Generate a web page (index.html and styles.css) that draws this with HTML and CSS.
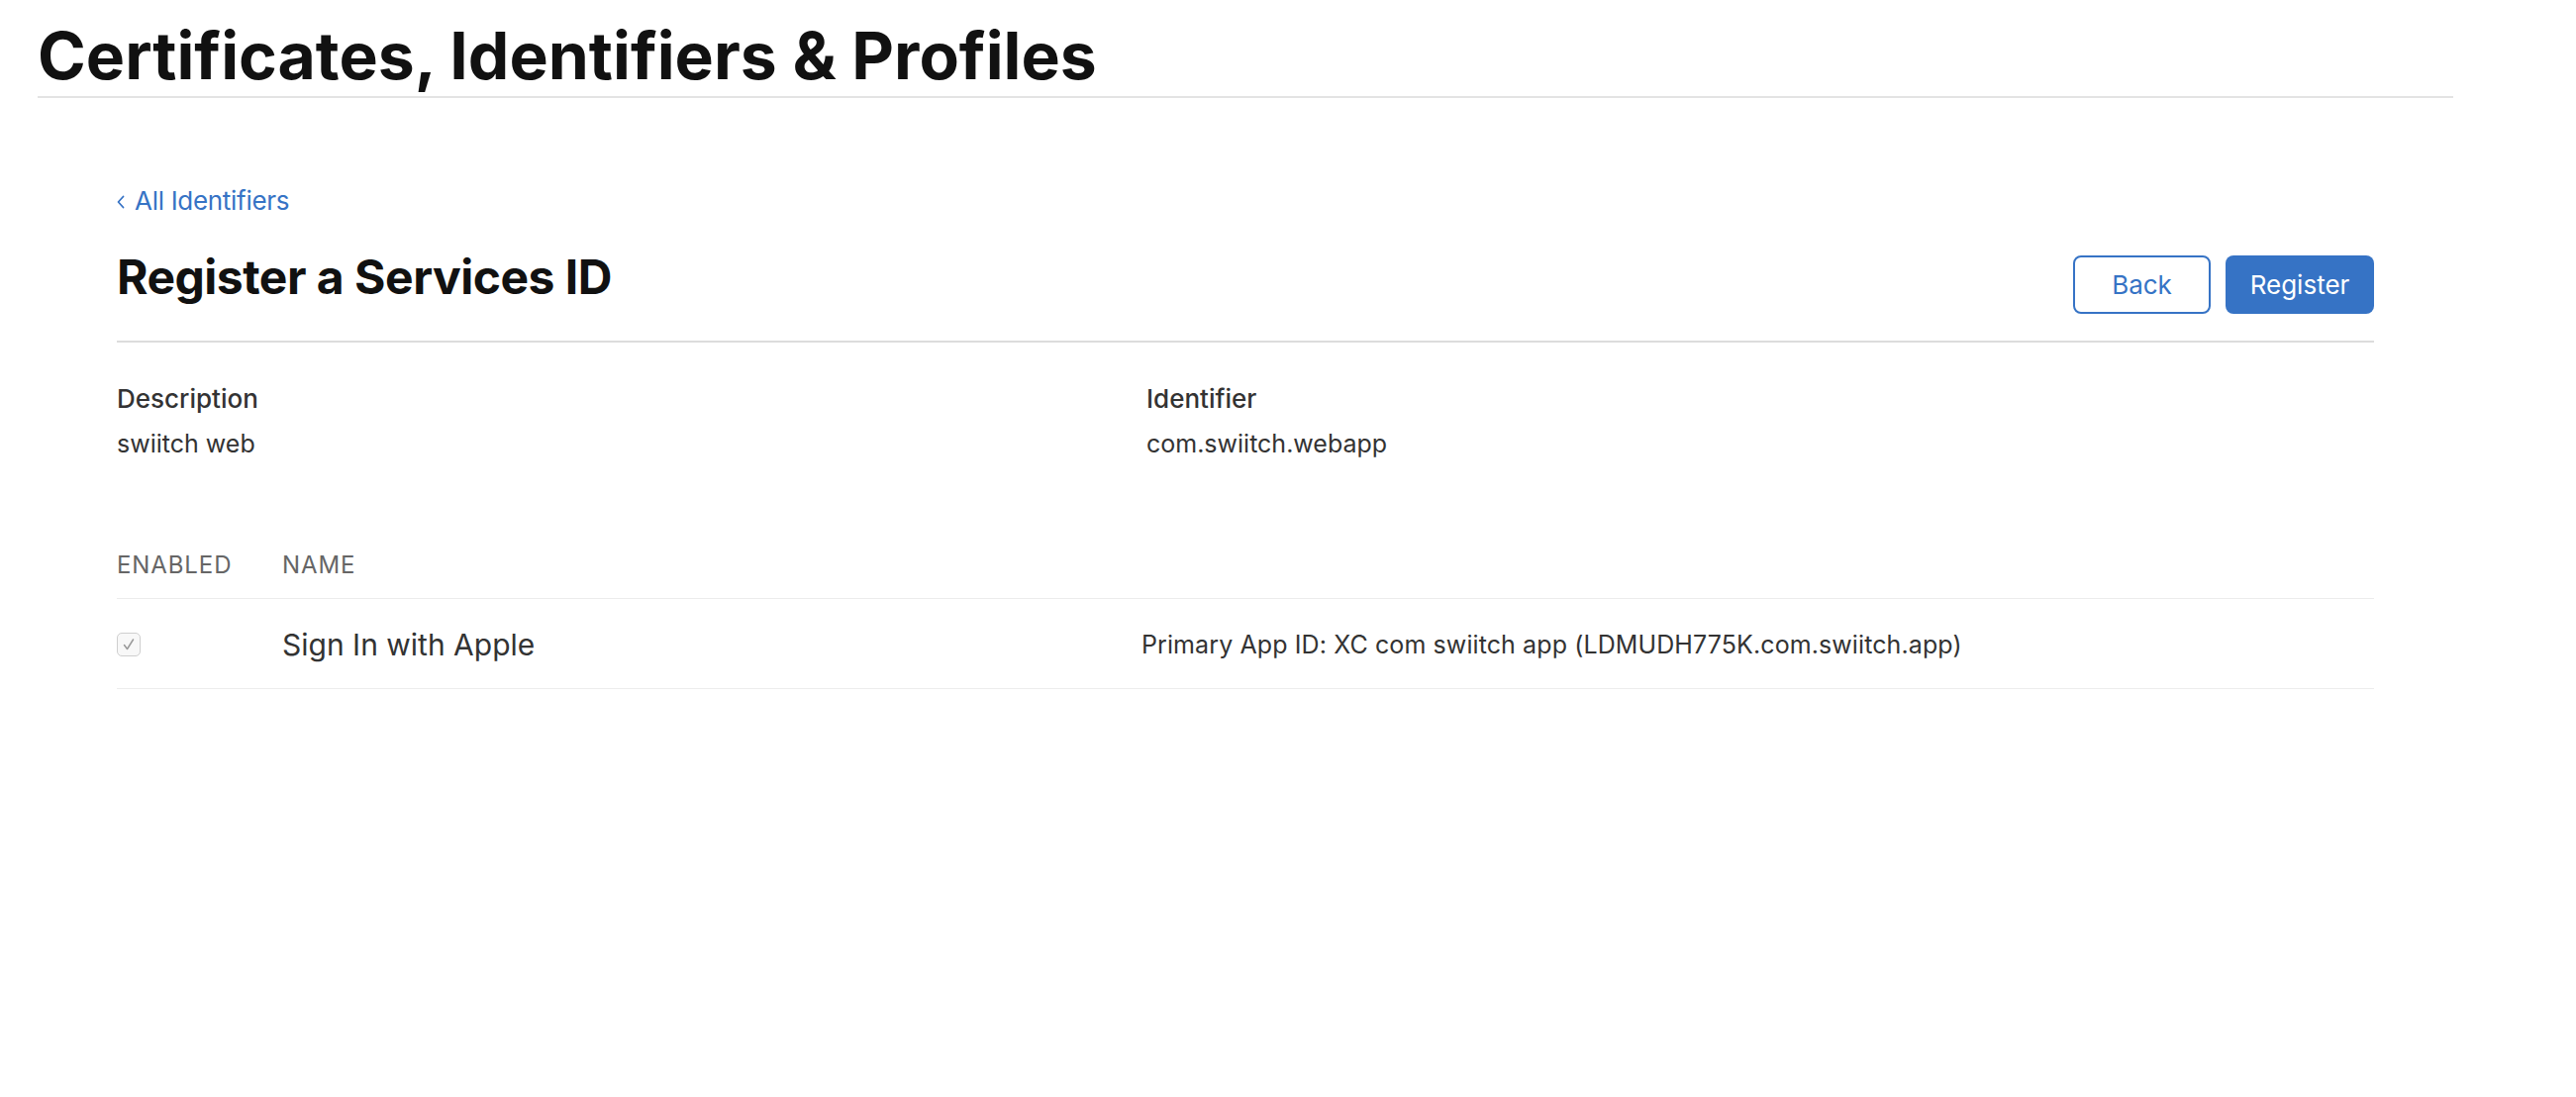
FILE: index.html
```html
<!DOCTYPE html>
<html lang="en">
<head>
<meta charset="utf-8">
<title>Register a Services ID</title>
<link rel="stylesheet" href="styles.css">
</head>
<body>
<header class="page-header">
  <h1 class="page-title">Certificates, Identifiers &amp; Profiles</h1>
</header>
<main class="content">
  <a class="back-link" href="#"><svg class="chev" width="8" height="14" viewBox="0 0 8 14"><path d="M6.5 1.5 L1.5 7 L6.5 12.5" fill="none" stroke="currentColor" stroke-width="1.8" stroke-linecap="round" stroke-linejoin="round"/></svg><span>All Identifiers</span></a>
  <div class="title-row">
    <h2 class="section-title">Register a Services ID</h2>
    <div class="actions">
      <button class="btn btn-outline">Back</button>
      <button class="btn btn-primary">Register</button>
    </div>
  </div>
  <div class="details">
    <div class="field">
      <div class="field-label">Description</div>
      <div class="field-value">swiitch web</div>
    </div>
    <div class="field">
      <div class="field-label">Identifier</div>
      <div class="field-value">com.swiitch.webapp</div>
    </div>
  </div>
  <div class="table">
    <div class="thead">
      <div class="th">ENABLED</div>
      <div class="th">NAME</div>
      <div class="th"></div>
    </div>
    <div class="trow">
      <div class="td"><span class="checkbox"><svg width="16" height="16" viewBox="0 0 16 16"><path d="M3.5 8.5 L6.5 12.5 L12.5 3" fill="none" stroke="#9a9a9a" stroke-width="1.5" stroke-linecap="round" stroke-linejoin="round"/></svg></span></div>
      <div class="td name">Sign In with Apple</div>
      <div class="td desc">Primary App ID: XC com swiitch app (LDMUDH775K.com.swiitch.app)</div>
    </div>
  </div>
</main>
</body>
</html>
```
FILE: styles.css
```css
* { box-sizing: border-box; }
html, body { margin: 0; padding: 0; background: #fff; }
body {
  font-family: Inter, "Noto Sans", "Liberation Sans", sans-serif;
  color: #333;
}
.page-header {
  margin-left: 38px;
  width: 2440px;
  padding-top: 23px;
  padding-bottom: 8px;
  border-bottom: 2px solid #e3e3e3;
}
.page-title {
  margin: 0;
  font-size: 66px;
  line-height: 66px;
  font-weight: 700;
  color: #111;
  letter-spacing: 0;
}
.content {
  margin-left: 118px;
  width: 2280px;
  padding-top: 91px;
}
.back-link {
  display: flex;
  align-items: center;
  gap: 10px;
  color: #3673c5;
  text-decoration: none;
  font-size: 26px;
  line-height: 26px;
  height: 26px;
  letter-spacing: -0.3px;
}
.back-link .chev { margin-top: 2px; }
.title-row {
  display: flex;
  justify-content: space-between;
  align-items: flex-start;
  margin-top: 40px;
  padding-bottom: 27px;
  border-bottom: 2px solid #dcdcdc;
}
.section-title {
  margin: 0;
  font-size: 48px;
  line-height: 48px;
  font-weight: 700;
  color: #111;
  letter-spacing: -0.5px;
}
.actions {
  display: flex;
  gap: 15px;
  margin-top: 2px;
}
.btn {
  height: 59px;
  border-radius: 8px;
  font-family: inherit;
  font-size: 26px;
  line-height: 26px;
  font-weight: 400;
  padding: 0;
  cursor: pointer;
}
.btn-outline {
  width: 139px;
  background: #fff;
  color: #3673c5;
  border: 2px solid #3673c5;
}
.btn-primary {
  width: 150px;
  background: #3673c5;
  color: #fff;
  border: none;
}
.details {
  display: grid;
  grid-template-columns: 1040px 1fr;
  padding-top: 44px;
}
.field-label {
  font-size: 26px;
  line-height: 26px;
  font-weight: 500;
  color: #333;
}
.field-value {
  margin-top: 19px;
  font-size: 25px;
  line-height: 26px;
  color: #333;
}
.table { margin-top: 98px; }
.thead, .trow {
  display: grid;
  grid-template-columns: 167px 868px 1fr;
}
.thead {
  padding-bottom: 21px;
  border-bottom: 1px solid #ececec;
}
.th {
  font-size: 24px;
  line-height: 24px;
  color: #666;
  letter-spacing: 0.9px;
}
.trow {
  height: 91px;
  align-items: center;
  padding-top: 2px;
  border-bottom: 1px solid #ececec;
}
.td { display: flex; align-items: center; }
.checkbox {
  width: 24px;
  height: 24px;
  border: 1px solid #cfcfcf;
  border-radius: 5px;
  background: #f8f8f8;
  display: flex;
  align-items: center;
  justify-content: center;
}
.name {
  font-size: 30px;
  line-height: 30px;
  color: #333;
}
.desc {
  font-size: 25px;
  line-height: 25px;
  color: #333;
  letter-spacing: 0.1px;
}
```
